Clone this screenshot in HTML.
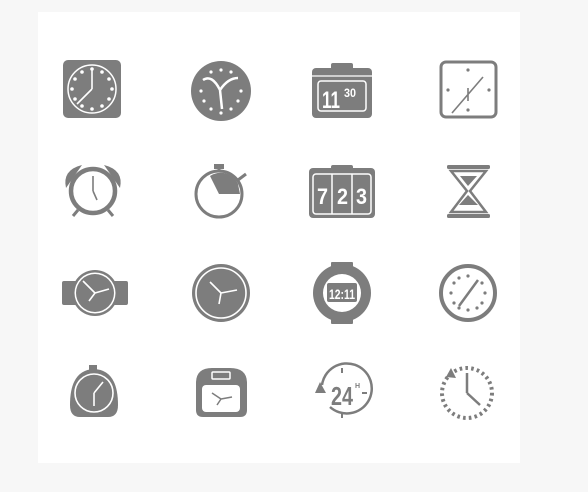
<!DOCTYPE html>
<html><head><style>
html,body{margin:0;padding:0;background:#f7f7f7;width:588px;height:492px;overflow:hidden}
svg{position:absolute;left:0;top:0}
text{font-family:"Liberation Sans Narrow","Liberation Sans",sans-serif;font-weight:bold;fill:#fff}
</style></head><body>
<svg width="588" height="492" viewBox="0 0 588 492">
<rect x="38" y="12" width="482" height="451" fill="#fff"/>
<g fill="#7d7d7d" stroke="none">
<!-- r1c1 -->
<rect x="63" y="60" width="58" height="58" rx="5"/>
<circle cx="92" cy="89" r="24" fill="none" stroke="#fff" stroke-width="1.5"/>
<g fill="#fff"><circle cx="92" cy="69" r="1.8"/><circle cx="92" cy="109" r="1.8"/><circle cx="72" cy="89" r="1.8"/><circle cx="112" cy="89" r="1.8"/><circle cx="102" cy="72" r="1.8"/><circle cx="82" cy="72" r="1.8"/><circle cx="102" cy="106" r="1.8"/><circle cx="82" cy="106" r="1.8"/><circle cx="75" cy="79" r="1.8"/><circle cx="109" cy="79" r="1.8"/><circle cx="75" cy="99" r="1.8"/><circle cx="109" cy="99" r="1.8"/></g>
<path d="M92 89V70M92 89L77 104" stroke="#fff" stroke-width="1.6"/>
<!-- r1c2 -->
<circle cx="221" cy="91" r="30"/>
<path d="M203 80 Q212 74 220 90 L222 109 M220 90 Q228 78 238 78" stroke="#fff" stroke-width="2.5" fill="none"/>
<g fill="#fff"><circle cx="221" cy="70" r="1.6"/><circle cx="211" cy="72" r="1.6"/><circle cx="231" cy="72" r="1.6"/><circle cx="241" cy="91" r="1.6"/><circle cx="201" cy="91" r="1.6"/><circle cx="204" cy="101" r="1.6"/><circle cx="238" cy="101" r="1.6"/><circle cx="211" cy="109" r="1.6"/><circle cx="231" cy="109" r="1.6"/><circle cx="221" cy="113" r="1.6"/></g>
<!-- r1c3 -->
<rect x="331" y="63" width="22" height="8" rx="2"/>
<rect x="312" y="68" width="60" height="50" rx="4"/>
<path d="M312 76H372" stroke="#fff" stroke-width="1.2"/>
<rect x="318" y="81" width="48" height="30" rx="3" fill="none" stroke="#fff" stroke-width="1.5"/>
<text x="322" y="108" font-size="24" textLength="18" lengthAdjust="spacingAndGlyphs">11</text>
<text x="344" y="97" font-size="12" textLength="12" lengthAdjust="spacingAndGlyphs">30</text>
<!-- r1c4 -->
<rect x="441" y="62" width="55" height="55" rx="5" fill="none" stroke="#7d7d7d" stroke-width="3"/>
<path d="M483 77L452 113M468 101V88" stroke="#7d7d7d" stroke-width="1.6"/>
<circle cx="468" cy="70" r="1.6"/><circle cx="468" cy="110" r="1.6"/><circle cx="448" cy="90" r="1.6"/><circle cx="489" cy="90" r="1.6"/>
<!-- r2c1 -->
<path d="M66 188 Q62 170 82 165 Z M120 188 Q124 170 104 165 Z"/>
<circle cx="93" cy="191" r="22" fill="#fff" stroke="#7d7d7d" stroke-width="4.5"/>
<path d="M78 210L73 216M108 210L113 216" stroke="#7d7d7d" stroke-width="3"/>
<path d="M93 191V176M93 191L97 200" stroke="#7d7d7d" stroke-width="1.6"/>
<!-- r2c2 -->
<rect x="214" y="164" width="10" height="5"/>
<path d="M219 169V173" stroke="#7d7d7d" stroke-width="3"/>
<circle cx="219" cy="194" r="23" fill="#fff" stroke="#7d7d7d" stroke-width="3"/>
<path d="M219 194 L210 176 A19 19 0 0 1 238 184 L240 194Z"/>
<path d="M238 180L246 174" stroke="#7d7d7d" stroke-width="3"/>
<!-- r2c3 -->
<rect x="331" y="165" width="22" height="8" rx="2"/>
<rect x="309" y="168" width="66" height="50" rx="4"/>
<rect x="313" y="174" width="58" height="40" rx="3" fill="none" stroke="#fff" stroke-width="1.5"/>
<path d="M332 174V214M352 174V214" stroke="#fff" stroke-width="1.5"/>
<text x="317" y="204" font-size="22" textLength="11" lengthAdjust="spacingAndGlyphs">7</text><text x="337" y="204" font-size="22" textLength="11" lengthAdjust="spacingAndGlyphs">2</text><text x="356" y="204" font-size="22" textLength="11" lengthAdjust="spacingAndGlyphs">3</text>
<!-- r2c4 -->
<rect x="447" y="165" width="43" height="4" rx="1.5"/>
<rect x="447" y="214" width="43" height="4" rx="1.5"/>
<path d="M451 171 L486 171 L470 191 L486 212 L451 212 L467 191Z" fill="none" stroke="#7d7d7d" stroke-width="2.5"/>
<path d="M459 205 L478 205 L468 195Z M460 176 L477 176 L468 186Z"/>
<!-- r3c1 -->
<rect x="62" y="281" width="66" height="24" rx="2"/>
<rect x="89" y="273" width="8" height="5"/>
<circle cx="95" cy="293" r="23"/>
<circle cx="95" cy="293" r="20.5" fill="#fff"/>
<circle cx="95" cy="293" r="19"/>
<path d="M95 293L83 281M95 293L109 289M95 293L89 301" stroke="#fff" stroke-width="1.6"/>
<!-- r3c2 -->
<circle cx="221" cy="293" r="29"/>
<circle cx="221" cy="293" r="25" fill="none" stroke="#fff" stroke-width="1.6"/>
<path d="M221 293L210 282M221 293L237 290M221 293L219 304" stroke="#fff" stroke-width="1.6"/>
<!-- r3c3 -->
<rect x="331" y="262" width="22" height="9" rx="1"/>
<rect x="331" y="315" width="22" height="9" rx="1"/>
<circle cx="342" cy="293" r="29"/>
<circle cx="342" cy="293" r="19" fill="#fff"/>
<rect x="327" y="283" width="30" height="19" rx="2"/>
<text x="329" y="299" font-size="14" textLength="26" lengthAdjust="spacingAndGlyphs">12:11</text>
<!-- r3c4 -->
<circle cx="468" cy="293" r="27" fill="none" stroke="#7d7d7d" stroke-width="4"/>
<path d="M459 306L478 280" stroke="#7d7d7d" stroke-width="2.5"/>
<g><circle cx="468" cy="276" r="1.6"/><circle cx="468" cy="310" r="1.6"/><circle cx="451" cy="293" r="1.6"/><circle cx="485" cy="293" r="1.6"/><circle cx="454" cy="283" r="1.6"/><circle cx="482" cy="283" r="1.6"/><circle cx="454" cy="303" r="1.6"/><circle cx="482" cy="303" r="1.6"/><circle cx="459" cy="278" r="1.6"/><circle cx="459" cy="308" r="1.6"/><circle cx="477" cy="308" r="1.6"/></g>
<!-- r4c1 -->
<rect x="89" y="365" width="8" height="5"/>
<path d="M70 405 Q70 370 94 369 Q118 370 118 405 Q118 417 108 417 H80 Q70 417 70 405Z"/>
<circle cx="94" cy="393" r="19" fill="none" stroke="#fff" stroke-width="1.6"/>
<path d="M94 393L103 382M94 393V406" stroke="#fff" stroke-width="1.6"/>
<!-- r4c2 -->
<path d="M196 383 Q196 368 212 368 H230 Q247 368 247 383 V410 Q247 417 240 417 H203 Q196 417 196 410Z"/>
<rect x="212" y="372" width="18" height="7" rx="1" fill="none" stroke="#fff" stroke-width="1.5"/>
<rect x="202" y="385" width="38" height="27" rx="4" fill="#fff"/>
<path d="M221 399L212 393M221 399L232 397M221 399L217 405" stroke="#7d7d7d" stroke-width="1.5"/>
<!-- r4c3 -->
<path d="M322 385 A25 25 0 1 1 330 407" fill="none" stroke="#7d7d7d" stroke-width="2.5"/>
<path d="M342 368V373M342 413V418M367 393H362" stroke="#7d7d7d" stroke-width="2"/>
<path d="M315 393 L320 382 L326 393Z"/>
<text x="331" y="405" font-size="26" style="fill:#7d7d7d" textLength="22" lengthAdjust="spacingAndGlyphs">24</text>
<text x="355" y="388" font-size="7" style="fill:#7d7d7d">H</text>
<!-- r4c4 -->
<circle cx="467" cy="393" r="25" fill="none" stroke="#7d7d7d" stroke-width="4" stroke-dasharray="2.6 3.2"/>
<path d="M446 377 L451 368 L456 378Z"/>
<path d="M467 393V373M467 393L480 405" stroke="#7d7d7d" stroke-width="2.5"/>
</g>
</svg>
</body></html>
